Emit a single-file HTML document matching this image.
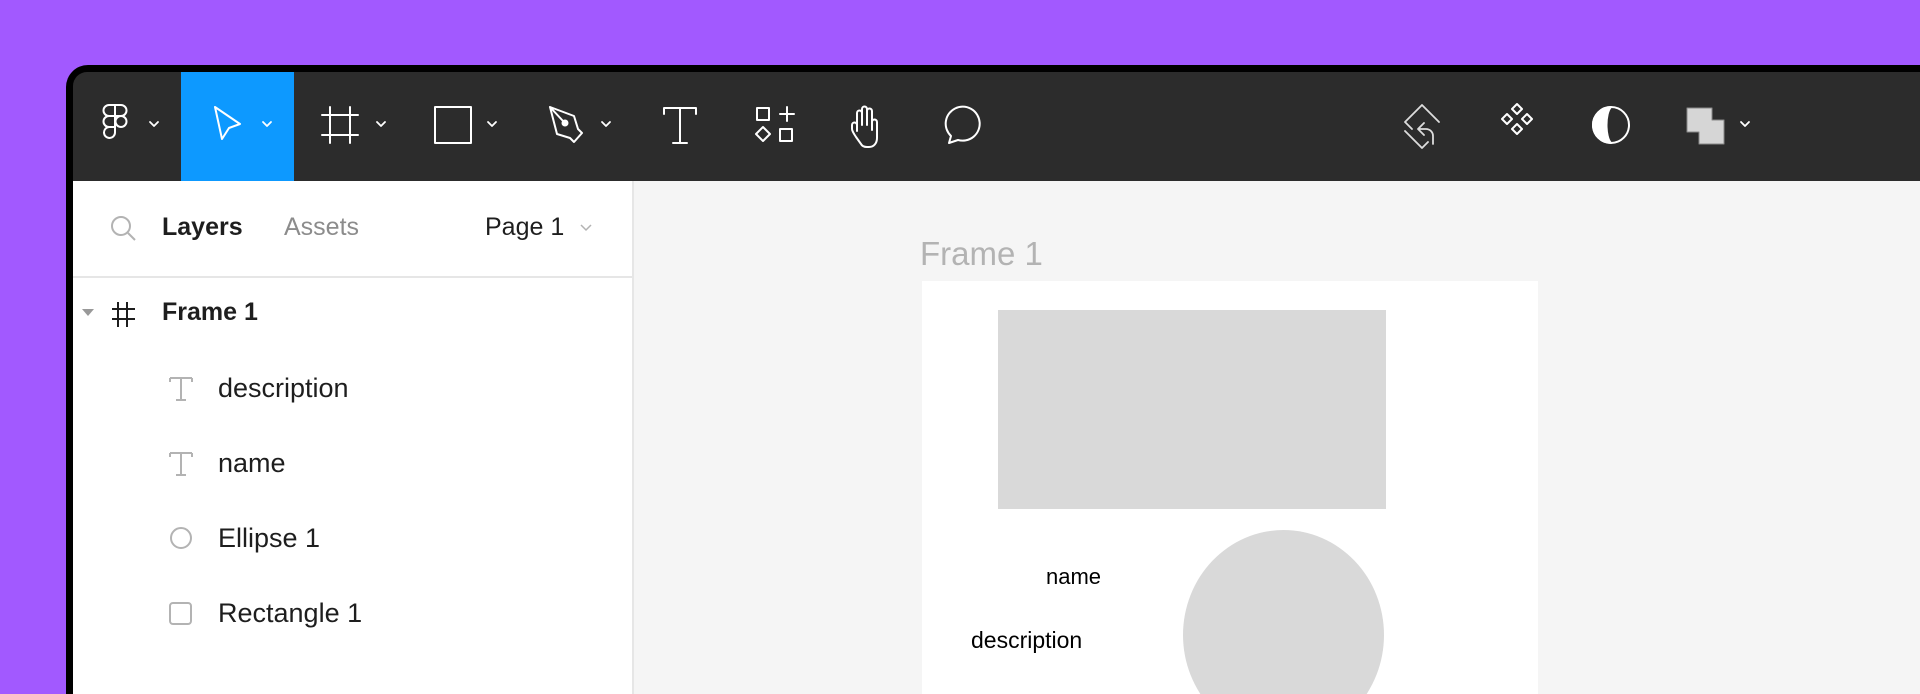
<!DOCTYPE html>
<html style="overflow:hidden;width:1920px;height:694px"><head><meta charset="utf-8"><style>
*{margin:0;padding:0;box-sizing:border-box}
html,body{width:1920px;height:694px;overflow:hidden}
body{background:#a259ff;font-family:"Liberation Sans",sans-serif;position:relative}
svg{display:block}
.outer{position:absolute;left:66px;top:65px;width:1854px;height:629px;background:#000;border-top-left-radius:22px}
.tb{position:absolute;left:73px;top:72px;width:1847px;height:109px;background:#2c2c2c;border-top-left-radius:14px}
.blue{position:absolute;left:181px;top:72px;width:113px;height:109px;background:#0d99ff}
.panel{position:absolute;left:73px;top:181px;width:559px;height:513px;background:#fff}
.sep{position:absolute;left:632px;top:181px;width:2px;height:513px;background:#e6e6e6}
.canvas{position:absolute;left:634px;top:181px;width:1286px;height:513px;background:#f5f5f5}
.t{position:absolute;white-space:nowrap;color:#1e1e1e;line-height:1.15}
</style></head><body>
<div class="outer"></div>
<div class="tb"></div>
<div class="blue"></div>
<svg width="1920" height="181" style="position:absolute;left:0;top:0" fill="none" stroke="#fff" stroke-width="2" stroke-linejoin="round" stroke-linecap="round">
 <g transform="translate(103,105)">
  <path d="M6 0h6v11H6a5.5 5.5 0 0 1 0-11z M12 0h6a5.5 5.5 0 0 1 0 11h-6z M6 11h6v11H6a5.5 5.5 0 0 1 0-11z M12 22v5.5a5.5 5.5 0 1 1-6-5.5 M18 11a5.5 5.5 0 1 1 0 11a5.5 5.5 0 0 1 0-11z"/>
 </g>
 <g stroke-width="1.8">
  <path d="M150 122l4 4 4-4"/><path d="M263 122l4 4 4-4"/><path d="M377 122l4 4 4-4"/><path d="M488 122l4 4 4-4"/><path d="M602 122l4 4 4-4"/><path d="M1741 122l4 4 4-4"/>
 </g>
 <path d="M215 107l25 17-11 4-7 11z"/>
 <path d="M330 107v36 M350 107v36 M322 115h36 M322 135h36"/>
 <rect x="435" y="107" width="36" height="36"/>
 <path d="M550 107l24 9 4 13 4 4-8 9-4-4-13-4z M550 107l13 14"/><circle cx="565" cy="123" r="2.5" fill="#fff"/>
 <path d="M664 108h32v6 M664 108v6 M680 108v35 M673 143h14"/>
 <rect x="757" y="108" width="12" height="12"/><path d="M787 107v14 M780 114h14"/><path d="M763 127l7 7-7 7-7-7z"/><rect x="780" y="129" width="12" height="12"/>
 <path d="M857 131v-18a2.5 2.5 0 0 1 5 0v12 M862 125v-16a2.5 2.5 0 0 1 5 0v16 M867 125v-14a2.5 2.5 0 0 1 5 0v18 M857 131v-6a2.5 2.5 0 0 0-5 0v4c0 2 2 5 4 8l5 7c1 2 3 3 6 3h2c5 0 8-4 8-9v-16a2.5 2.5 0 0 0-5 0v8"/>
 <path d="M949 143l2-7a17 17 0 1 1 7 4z"/>
 <g stroke="#ddd" stroke-width="1.8">
  <path d="M1412 129l-7-7 17-17 17 17 M1422 148l-17-17 M1422 148l6-6"/>
  <path d="M1424 135l-6-6 6-6 M1418 129h8a7 7 0 0 1 7 7v8"/>
 </g>
 <path d="M1517 104l5 5-5 5-5-5z M1507 114l5 5-5 5-5-5z M1527 114l5 5-5 5-5-5z M1517 124l5 5-5 5-5-5z"/>
 <circle cx="1611" cy="125" r="18"/>
 <path d="M1611 107a18 18 0 0 0 0 36c-6-6-6-30 0-36z" fill="#fff"/>
 <path d="M1687 108h25v12h12v24h-25v-12h-12z" fill="#d6d6d6" stroke="#888" stroke-width="1"/>
</svg>
<div class="panel"></div>
<div class="sep"></div>
<div class="canvas"></div>
<svg width="640" height="640" style="position:absolute;left:0;top:0" fill="none">
 <circle cx="121" cy="226" r="9" stroke="#b3b3b3" stroke-width="2"/><path d="M128 233l7 7" stroke="#b3b3b3" stroke-width="2"/>
 <path d="M581 225l5 5 5-5" stroke="#b3b3b3" stroke-width="1.5"/>
 <rect x="73" y="276" width="559" height="2" fill="#e6e6e6"/>
 <path d="M82 309h12l-6 7z" fill="#999"/>
 <path d="M118 302v25 M127 302v25 M112 309h23 M112 319h23" stroke="#1e1e1e" stroke-width="2"/>
 <g stroke="#b3b3b3" stroke-width="2">
  <path d="M170 378h22 M170 378v4 M192 378v4 M181 378v22 M176 400h10"/>
  <path d="M170 453h22 M170 453v4 M192 453v4 M181 453v22 M176 475h10"/>
  <circle cx="181" cy="538" r="10"/>
  <rect x="170" y="603" width="21" height="21" rx="3"/>
 </g>
</svg>
<div class="t" style="left:162px;top:213px;font-size:25px;font-weight:bold">Layers</div>
<div class="t" style="left:284px;top:213px;font-size:25px;color:#8c8c8c">Assets</div>
<div class="t" style="left:485px;top:213px;font-size:25px">Page 1</div>
<div class="t" style="left:162px;top:298px;font-size:25px;font-weight:bold">Frame 1</div>
<div class="t" style="left:218px;top:373px;font-size:27px">description</div>
<div class="t" style="left:218px;top:448px;font-size:27px">name</div>
<div class="t" style="left:218px;top:523px;font-size:27px">Ellipse 1</div>
<div class="t" style="left:218px;top:598px;font-size:27px">Rectangle 1</div>
<div class="t" style="left:920px;top:235px;font-size:33px;color:#b3b3b3">Frame 1</div>
<div style="position:absolute;left:922px;top:281px;width:616px;height:413px;background:#fff;overflow:hidden">
 <div style="position:absolute;left:76px;top:29px;width:388px;height:199px;background:#d9d9d9"></div>
 <div style="position:absolute;left:261px;top:249px;width:201px;height:210px;border-radius:50%;background:#d9d9d9"></div>
 <div class="t" style="left:124px;top:283px;font-size:22px;color:#000">name</div>
 <div class="t" style="left:49px;top:346px;font-size:23px;color:#000">description</div>
</div>
</body></html>
